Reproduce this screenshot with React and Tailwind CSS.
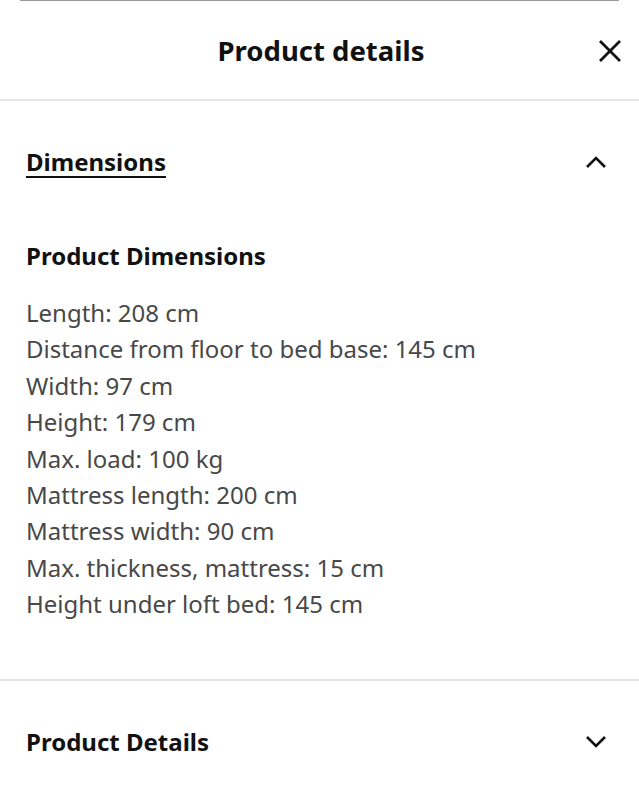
import React from "react";

const ChevronUp = () => (
  <svg width="22" height="14" viewBox="0 0 22 14" fill="none">
    <path d="M2 12 L11 3 L20 12" stroke="#111" strokeWidth="2.6" />
  </svg>
);
const ChevronDown = () => (
  <svg width="22" height="14" viewBox="0 0 22 14" fill="none">
    <path d="M2 2 L11 11 L20 2" stroke="#111" strokeWidth="2.6" />
  </svg>
);
const Close = () => (
  <svg width="24" height="24" viewBox="0 0 24 24" fill="none">
    <path d="M2 2 L22 22 M22 2 L2 22" stroke="#111" strokeWidth="2.8" />
  </svg>
);

const items = [
  "Length: 208 cm",
  "Distance from floor to bed base: 145 cm",
  "Width: 97 cm",
  "Height: 179 cm",
  "Max. load: 100 kg",
  "Mattress length: 200 cm",
  "Mattress width: 90 cm",
  "Max. thickness, mattress: 15 cm",
  "Height under loft bed: 145 cm",
];

export default function App() {
  return (
    <div
      className="w-[639px] h-[800px] bg-white overflow-hidden text-[#111]"
      style={{ fontFamily: '"Noto Sans", "Open Sans", sans-serif' }}
    >
      <div className="h-px mx-[20px] bg-[#9a9a9a]" />
      <div className="h-[100px] pt-px grid grid-cols-[1fr_auto_1fr] items-center border-b-2 border-[#e6e6e6] pr-[17px]">
        <div />
        <div className="text-[27.5px] font-bold leading-none ml-[20px]">Product details</div>
        <div className="flex justify-end">
          <Close />
        </div>
      </div>

      <div className="px-[26px]">
        <div className="h-[122px] flex items-center justify-between pr-[6px]">
          <span className="text-[24px] font-bold underline decoration-2 underline-offset-[5px]">
            Dimensions
          </span>
          <ChevronUp />
        </div>
        <div className="mt-[17px] text-[24px] font-bold leading-[32px]">Product Dimensions</div>
        <div className="mt-[23px] mb-[56px] flex flex-col text-[24px] leading-[36.4px] text-[#484848]">
          {items.map((t) => (
            <div key={t}>{t}</div>
          ))}
        </div>
      </div>

      <div className="border-t-2 border-[#e6e6e6] px-[26px]">
        <div className="h-[122px] flex items-center justify-between pr-[6px]">
          <span className="text-[24px] font-bold">Product Details</span>
          <ChevronDown />
        </div>
      </div>
    </div>
  );
}
